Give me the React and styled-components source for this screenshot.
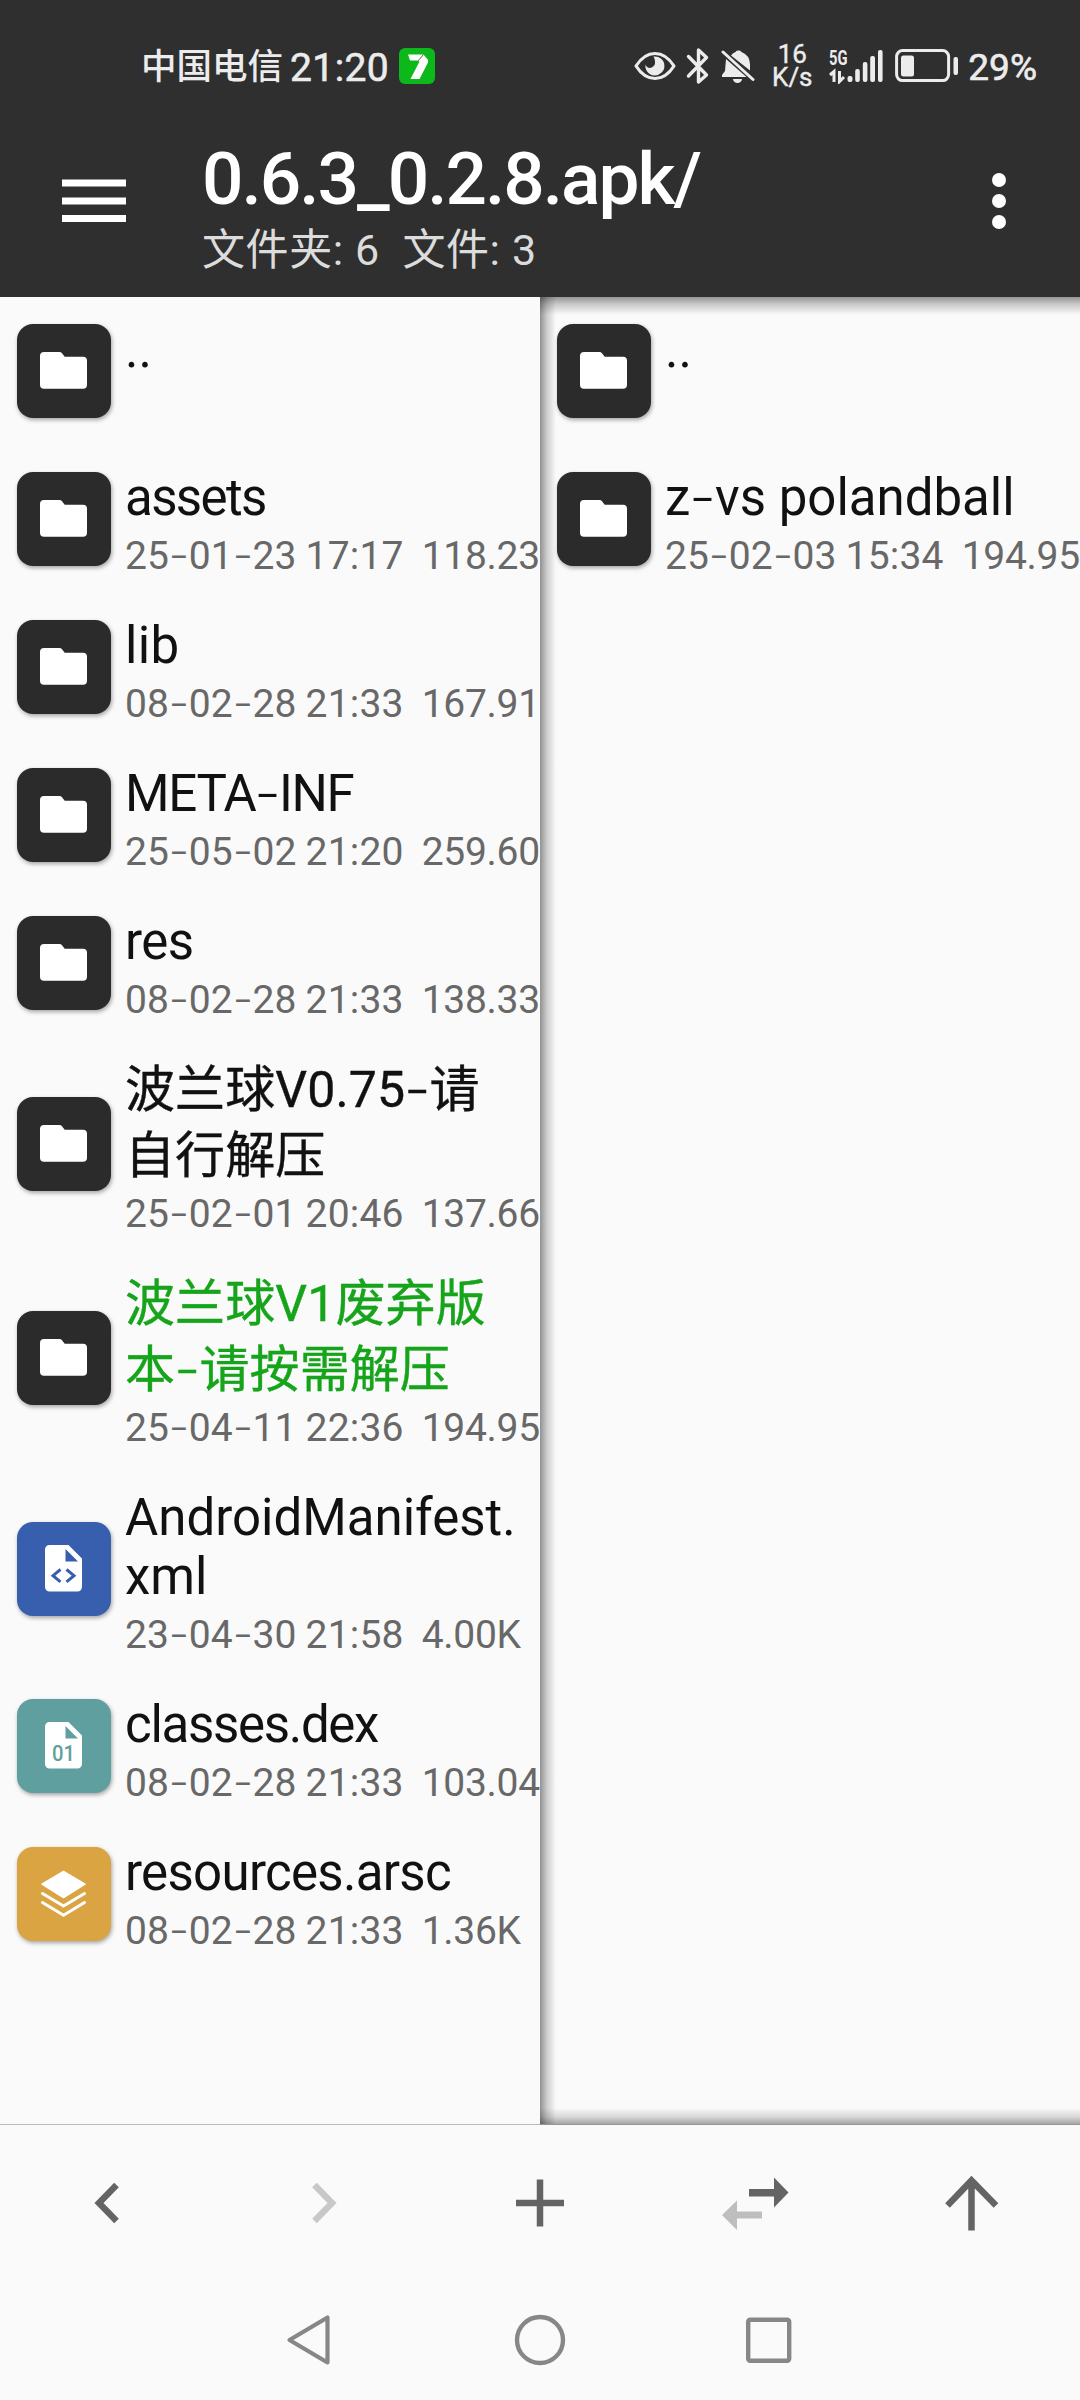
import React from 'react';
import styled, { createGlobalStyle } from 'styled-components';

const leftFiles = [
    { name: '..', icon: 'folder' },
    { name: 'assets', icon: 'folder', date: '25-01-23 17:17', size: '118.23', tracking: -1.6 },
    { name: 'lib', icon: 'folder', date: '08-02-28 21:33', size: '167.91', tracking: 0.4 },
    { name: 'META-INF', icon: 'folder', date: '25-05-02 21:20', size: '259.60', tracking: -1.3 },
    { name: 'res', icon: 'folder', date: '08-02-28 21:33', size: '138.33', tracking: -0.6 },
    { name: '波兰球V0.75-请自行解压', icon: 'folder', date: '25-02-01 20:46', size: '137.66', cjk: true, tracking: 0.1 },
    { name: '波兰球V1废弃版本-请按需解压', icon: 'folder', date: '25-04-11 22:36', size: '194.95', cjk: true, color: '#15a41a', tracking: 0.1 },
    { name: 'AndroidManifest.\u200bxml', icon: 'xml', date: '23-04-30 21:58', size: '4.00K' },
    { name: 'classes.dex', icon: 'dex', date: '08-02-28 21:33', size: '103.04', tracking: -1.3 },
    { name: 'resources.arsc', icon: 'arsc', date: '08-02-28 21:33', size: '1.36K', tracking: -0.7 },
];

const rightFiles = [
    { name: '..', icon: 'folder' },
    { name: 'z-vs polandball', icon: 'folder', date: '25-02-03 15:34', size: '194.95' },
];

const tileColors = {
    folder: '#2b2b2b',
    xml: '#385eae',
    dex: '#5f9f9f',
    arsc: '#d9a441',
};

// The hyphen is wide and sits high, so it has its own span
const withDashes = (text) =>
    text.split('-').map((part, i) => (
        <React.Fragment key={i}>
            {i > 0 && <Dash>-</Dash>}
            {part}
        </React.Fragment>
    ));

function TileIcon({ icon }) {
    if (icon === 'xml' || icon === 'dex') {
        return (
            <svg width="94" height="94" viewBox="0 0 94 94">
                <path
                    fill="#fff"
                    fillRule="evenodd"
                    d="M33 23h18.500l13.500 13.500v28.500a4.500 4.500 0 0 1-4.500 4.500h-28a4.500 4.500 0 0 1-4.500-4.500v-37.500a4.500 4.500 0 0 1 4.500-4.500zM48.500 27v12.500h12.500z"
                />
                {icon === 'xml' ? (
                    <path d="M43.500 47.500l-7.500 6.200 7.500 6.200M49.500 47.500l7.500 6.200-7.500 6.200" fill="none" stroke="#385eae" strokeWidth="3" />
                ) : (
                    <text x="35" y="62" fontFamily="Roboto, sans-serif" fontSize="22" fontWeight="500" fill="#5f9f9f" textLength="23" lengthAdjust="spacingAndGlyphs">01</text>
                )}
            </svg>
        );
    }
    if (icon === 'arsc') {
        return (
            <svg width="94" height="94" viewBox="0 0 94 94">
                <path d="M46.500 24.500L68 37.200 46.500 50.500 25 37.200z" fill="#fff" stroke="#fff" strokeWidth="1.500" strokeLinejoin="round" />
                <path d="M25.500 46.500l21 12.500 21-12.500M25.500 55.500l21 12.800 21-12.800" fill="none" stroke="#fff" strokeWidth="3" strokeLinecap="round" strokeLinejoin="round" />
            </svg>
        );
    }
    return (
        <svg width="94" height="94" viewBox="0 0 94 94">
            <path fill="#fff" d="M27 28h15.500q1.500 0 2.500 1.200l2.700 3.600h18.300a4 4 0 0 1 4 4v24a4 4 0 0 1-4 4h-39a4 4 0 0 1-4-4v-28.800a4 4 0 0 1 4-4z" />
        </svg>
    );
}

function FileRow({ file }) {
    return (
        <Row>
            <Tile $color={tileColors[file.icon]}>
                <TileIcon icon={file.icon} />
            </Tile>
            <Info $parent={!file.date}>
                <Name $cjk={file.cjk} $color={file.color} $tracking={file.tracking}>{withDashes(file.name)}</Name>
                {file.date && (
                    <Meta>
                        {withDashes(file.date)}
                        {'  '}
                        <Size>{file.size}</Size>
                    </Meta>
                )}
            </Info>
        </Row>
    );
}

function StatusBar() {
    return (
        <Status>
            <Carrier>中国电信</Carrier>
            <Clock>21:20</Clock>
            <svg width="36" height="36" viewBox="0 0 36 36">
                <rect width="36" height="36" rx="6" fill="#0cb81a" />
                <path d="M9 6.500h15.500l4.500 5.500v2.500l-8.500 16.500h-9l9-17.500-2.500-1h-7z" fill="#fff" />
                <path d="M24.500 6.500l-5.500 6.500" stroke="#5a6b4a" strokeWidth="1" />
            </svg>
            <StatusRight>
                <svg width="42" height="30" viewBox="0 0 42 30">
                    <path d="M2 15Q10 2.500 21 2.500T40 15Q32 27.500 21 27.500T2 15z" fill="none" stroke="#ececec" strokeWidth="3.200" strokeLinejoin="round" />
                    <path d="M19.500 5.500A9.500 9.500 0 1 1 11.500 13.500a5 5 0 0 0 4.500 3.500 5.500 5.500 0 0 0 5-6.500q-.3-3-1.500-5z" fill="#ececec" />
                </svg>
                <svg width="25" height="38" viewBox="0 0 25 38">
                    <path d="M2.500 9.500l18 18.500-8 7V3l8 7.500-18 18.500" fill="none" stroke="#ececec" strokeWidth="3.400" strokeLinejoin="round" strokeLinecap="round" />
                </svg>
                <svg width="34" height="36" viewBox="0 0 34 36">
                    <path d="M5 11L25.500 29H1v-2l3-4zM10 7.500q2-3 4.500-3.500a3.500 3 0 0 1 6 0q8 3 8.500 12v6.500zM12 31h9a4.500 4 0 0 1-9 0z" fill="#ececec" />
                    <path d="M2 4l30 27.500" stroke="#ececec" strokeWidth="3" strokeLinecap="round" />
                </svg>
                <Speed>
                    <span>16</span>
                    <span>K/s</span>
                </Speed>
                <svg width="56" height="36" viewBox="0 0 56 36">
                    <text x="0" y="17" fontFamily="Roboto, sans-serif" fontSize="20.500" fontWeight="700" fill="#ececec" textLength="18.500" lengthAdjust="spacingAndGlyphs">5G</text>
                    <path d="M1 27l4-3.500V34M10.500 23v10.500l4.500-4.500" fill="none" stroke="#ececec" strokeWidth="3" />
                    <g fill="#ececec">
                        <rect x="18.500" y="28" width="5" height="6" rx="2" />
                        <rect x="26.200" y="21" width="4.600" height="13" rx="2" />
                        <rect x="33.800" y="14" width="4.600" height="20" rx="2" />
                        <rect x="41.200" y="8" width="4.800" height="26" rx="2" />
                        <rect x="49" y="2" width="4.600" height="32" rx="2" />
                    </g>
                </svg>
                <svg width="64" height="34" viewBox="0 0 64 34">
                    <rect x="1.600" y="1.600" width="52" height="30" rx="6" fill="none" stroke="#ececec" strokeWidth="3" />
                    <rect x="6" y="6.500" width="13" height="21" rx="2.500" fill="#ececec" />
                    <rect x="58.500" y="8" width="4.500" height="18" rx="2" fill="#ececec" />
                </svg>
                <Percent>29%</Percent>
            </StatusRight>
        </Status>
    );
}

export default function App() {
    return (
        <Screen>
            <GlobalStyle />
            <Header>
                <StatusBar />
                <TitleBar>
                    <svg width="64" height="44" viewBox="0 0 64 44">
                        <path d="M0 4h64M0 22h64M0 39.500h64" stroke="#fff" strokeWidth="7" />
                    </svg>
                    <Titles>
                        <Title>0.6.3_0.2.8.apk/</Title>
                        <Subtitle>文件夹: 6{'  '}文件: 3</Subtitle>
                    </Titles>
                    <svg width="14" height="58" viewBox="0 0 14 58">
                        <g fill="#fff">
                            <circle cx="7" cy="8" r="7" />
                            <circle cx="7" cy="29" r="7" />
                            <circle cx="7" cy="50" r="7" />
                        </g>
                    </svg>
                </TitleBar>
            </Header>
            <Panels>
                <Panel>
                    {leftFiles.map((file) => <FileRow key={file.name} file={file} />)}
                </Panel>
                <Panel $inset>
                    {rightFiles.map((file) => <FileRow key={file.name} file={file} />)}
                </Panel>
            </Panels>
            <Toolbar>
                <Tool>
                    <svg width="70" height="70" viewBox="0 0 70 70">
                        <path d="M43.500 17L26 35l17.500 18" fill="none" stroke="#646464" strokeWidth="6.500" />
                    </svg>
                </Tool>
                <Tool>
                    <svg width="70" height="70" viewBox="0 0 70 70">
                        <path d="M25.500 17L43 35 25.500 53" fill="none" stroke="#c8c8c8" strokeWidth="6.500" />
                    </svg>
                </Tool>
                <Tool>
                    <svg width="70" height="70" viewBox="0 0 70 70">
                        <path d="M11 35h48M35 11.500v47" stroke="#646464" strokeWidth="6.500" />
                    </svg>
                </Tool>
                <Tool>
                    <svg width="70" height="70" viewBox="0 0 70 70">
                        <path d="M28 21h25V9.500l14.500 15L53 39.500V28.500H28z" fill="#646464" />
                        <path d="M41 43.500H16V32.500L1 47l15 15V50.500h25z" fill="#bebebe" />
                    </svg>
                </Tool>
                <Tool>
                    <svg width="70" height="70" viewBox="0 0 70 70">
                        <path d="M10.500 37.500L34.500 12.500l24.500 25M34.500 12v50.500" fill="none" stroke="#646464" strokeWidth="6.500" />
                    </svg>
                </Tool>
            </Toolbar>
            <NavBar>
                <svg width="54" height="54" viewBox="0 0 54 54">
                    <path d="M5.500 27L43.500 4.500v45z" fill="none" stroke="#878787" strokeWidth="4.200" strokeLinejoin="round" />
                </svg>
                <svg width="54" height="54" viewBox="0 0 54 54">
                    <circle cx="27" cy="27" r="23" fill="none" stroke="#878787" strokeWidth="4.400" />
                </svg>
                <svg width="54" height="54" viewBox="0 0 54 54">
                    <rect x="6.200" y="6.700" width="41" height="41" rx="2" fill="none" stroke="#878787" strokeWidth="4.400" />
                </svg>
            </NavBar>
        </Screen>
    );
}

const GlobalStyle = createGlobalStyle`
    body {
        margin: 0;
        background: #fafafa;
    }
    svg {
        display: block;
        flex: none;
    }
`;

const Screen = styled.div`
    display: flex;
    flex-direction: column;
    width: 1080px;
    height: 2400px;
    overflow: hidden;
    background: #fafafa;
    font-family: Roboto, "Noto Sans CJK SC", sans-serif;
`;

const Header = styled.header`
    height: 297px;
    flex: none;
    background: #2f2f2f;
    color: #fff;
`;

const Status = styled.div`
    display: flex;
    align-items: center;
    height: 131px;
    padding: 0 43px 0 141px;
    color: #ececec;
`;

const Carrier = styled.span`
    margin-top: 3px;
    font-size: 35.5px;
    font-weight: 500;
    line-height: 60px;
`;

const Clock = styled.span`
    margin: 4px 10px 0 7px;
    font-size: 39px;
    line-height: 60px;
    letter-spacing: 0.4px;
    -webkit-text-stroke: 0.6px #ececec;
`;

const StatusRight = styled.div`
    display: flex;
    align-items: center;
    margin-left: auto;
    gap: 10px;
`;

const Speed = styled.div`
    display: flex;
    flex-direction: column;
    align-items: center;
    width: 54px;
    font-size: 26px;
    line-height: 23px;
    -webkit-text-stroke: 0.4px #ececec;
`;

const Percent = styled.span`
    margin: 4px 0 0 -1px;
    font-size: 37px;
    line-height: 60px;
    -webkit-text-stroke: 0.6px #ececec;
`;

const TitleBar = styled.div`
    display: flex;
    align-items: center;
    height: 140px;
    padding: 0 74px 0 62px;
`;

const Titles = styled.div`
    flex: 1;
    margin: 20px 0 0 76px;
`;

const Title = styled.h1`
    margin: 0;
    font-size: 73px;
    font-weight: 500;
    line-height: 78px;
    letter-spacing: -2px;
`;

const Subtitle = styled.div`
    color: #dcdcdc;
    font-size: 43px;
    line-height: 64px;
    letter-spacing: 0.6px;
    white-space: pre;
`;

const Panels = styled.main`
    display: grid;
    grid-template-columns: 540px 540px;
    height: 1828px;
    flex: none;
`;

const Panel = styled.section`
    overflow: hidden;
    border-bottom: 1px solid ${(props) => (props.$inset ? '#969696' : '#b9b9b9')};
    background: ${(props) => props.$inset ? `
        linear-gradient(to right, rgba(0, 0, 0, 0.42), rgba(0, 0, 0, 0.18) 7px, transparent 16px),
        linear-gradient(to bottom, rgba(0, 0, 0, 0.4), rgba(0, 0, 0, 0.18) 8px, transparent 18px),
        linear-gradient(to top, rgba(0, 0, 0, 0.34), rgba(0, 0, 0, 0.14) 7px, transparent 16px)
    ` : 'none'};
`;

const Row = styled.div`
    display: flex;
    align-items: center;
    min-height: 148px;
    padding-left: 17px;
`;

const Tile = styled.div`
    flex: none;
    width: 94px;
    height: 94px;
    border-radius: 16px;
    background: ${(props) => props.$color};
    box-shadow: 1px 2px 4px rgba(0, 0, 0, 0.35);
`;

const Info = styled.div`
    flex: 1;
    min-width: 0;
    margin-left: 14px;
    padding: ${(props) => (props.$parent ? '0 0 43px' : '23px 0 11px')};
`;

const Name = styled.div`
    width: 398px;
    margin: ${(props) => (props.$cjk ? '-3.5px 0' : '0')};
    color: ${(props) => props.$color || '#111'};
    font-size: ${(props) => (props.$cjk ? 50 : 51)}px;
    line-height: ${(props) => (props.$cjk ? 66 : 59)}px;
    letter-spacing: ${(props) => props.$tracking || 0}px;
    ${(props) => props.$cjk && '-webkit-text-stroke: 0.4px currentColor;'}
`;

const Meta = styled.div`
    margin-top: 3px;
    color: #686868;
    font-size: 39px;
    line-height: 52px;
    letter-spacing: 0.2px;
    word-spacing: -0.9px;
    white-space: pre;
`;

const Size = styled.span`
    letter-spacing: -0.3px;
`;

const Dash = styled.span`
    display: inline-block;
    margin: 0 0.8px;
    font-family: Inter, sans-serif;
    font-weight: 300;
    line-height: 1;
    transform: scaleX(1.15);
`;

const Toolbar = styled.nav`
    display: grid;
    grid-template-columns: repeat(5, 216px);
    height: 156px;
    flex: none;
`;

const Tool = styled.div`
    display: flex;
    align-items: center;
    justify-content: center;
`;

const NavBar = styled.footer`
    display: flex;
    align-items: center;
    justify-content: center;
    gap: 175px;
    height: 118px;
    flex: none;
`;
